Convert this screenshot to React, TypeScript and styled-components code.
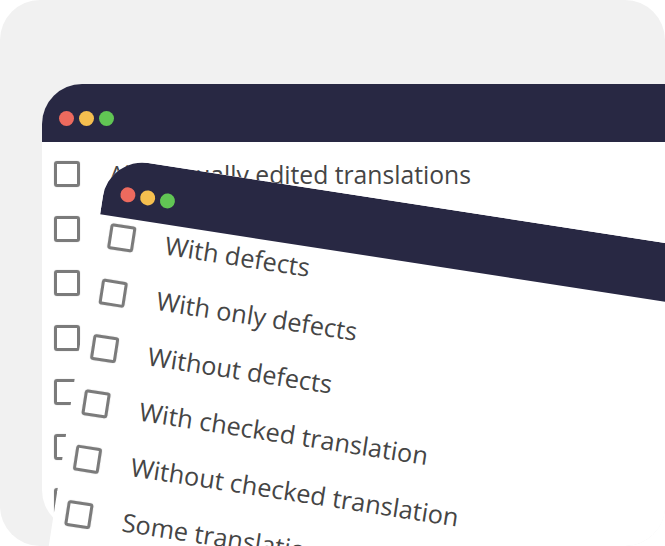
import React from 'react'
import styled, { createGlobalStyle } from 'styled-components'

const GlobalStyle = createGlobalStyle`
  body {
    margin: 0;
    background: #ffffff;
    font-family: "Open Sans", "Noto Sans", sans-serif;
  }
`;

const Card = styled.div`
  position: relative;
  width: 665px;
  height: 546px;
  box-sizing: border-box;
  padding: 84px 0 0 42px;
  background: #f1f1f1;
  border-radius: 40px;
  overflow: hidden;
`;

const Window = styled.div`
  width: 700px;
  height: 446px;
  display: flex;
  flex-direction: column;
  background: #ffffff;
  border-radius: 40px 0 0 40px;
  overflow: hidden;
`;

const FrontWindow = styled(Window)`
  position: absolute;
  left: 109px;
  top: 157px;
  height: 520px;
  transform: rotate(8.8deg);
  transform-origin: 0 0;
`;

const TitleBar = styled.div`
  flex: none;
  height: 58px;
  box-sizing: border-box;
  padding: 10px 0 0 17px;
  display: flex;
  align-items: center;
  gap: 5px;
  background: #282843;
`;

const Light = styled.span<{ $color: string }>`
  width: 15px;
  height: 15px;
  border-radius: 50%;
  background: ${({ $color }) => $color};
`;

const List = styled.ul<{ $top: number; $gap: number }>`
  margin: 0;
  padding: ${({ $top }) => $top}px 0 0 12px;
  list-style: none;
  display: flex;
  flex-direction: column;
  gap: ${({ $gap }) => $gap}px;
`;

const Row = styled.li<{ $space: number }>`
  height: 28px;
  display: flex;
  align-items: center;
  gap: ${({ $space }) => $space}px;
  white-space: nowrap;
`;

const Box = styled.span`
  flex: none;
  width: 26px;
  height: 26px;
  box-sizing: border-box;
  border: 3px solid #7b7b7b;
  border-radius: 3px;
  box-shadow: 0 0 1px rgba(0, 0, 0, 0.35);
`;

const Label = styled.span<{ $size: number }>`
  font-size: ${({ $size }) => $size}px;
  color: #454545;
`;

const backItems = [
  'All manually edited translations',
  'With defects',
  'With only defects',
  'Without defects',
  'With checked translation',
  'Without checked translation',
  'Some translations',
]

const frontItems = [
  'With defects',
  'With only defects',
  'Without defects',
  'With checked translation',
  'Without checked translation',
  'Some translations outdated',
  'All translations',
]

const Lights = () => (
  <TitleBar>
    <Light $color="#ed6a5e" />
    <Light $color="#f5bf4f" />
    <Light $color="#61c554" />
  </TitleBar>
)

const App = () => {
  return (
    <>
      <GlobalStyle />
      <Card>
        <Window>
          <Lights />
          <List $top={18} $gap={26.5}>
            {backItems.map((item) => (
              <Row key={item} $space={29}><Box /><Label $size={24.7}>{item}</Label></Row>
            ))}
          </List>
        </Window>
        <FrontWindow>
          <Lights />
          <List $top={6} $gap={28}>
            {frontItems.map((item) => (
              <Row key={item} $space={31}><Box /><Label $size={25.3}>{item}</Label></Row>
            ))}
          </List>
        </FrontWindow>
      </Card>
    </>
  )
}

export default App
